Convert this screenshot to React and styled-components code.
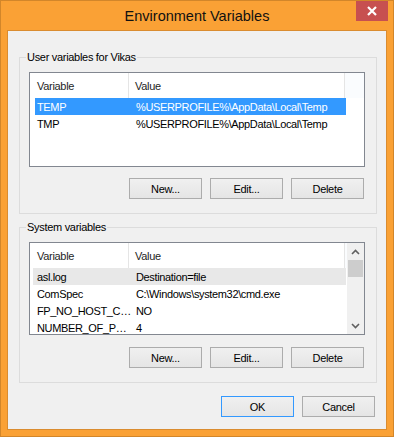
import React from 'react';
import styled, { createGlobalStyle } from 'styled-components';

const userVars = [
  { name: 'TEMP', value: '%USERPROFILE%\\AppData\\Local\\Temp', selected: true },
  { name: 'TMP', value: '%USERPROFILE%\\AppData\\Local\\Temp' },
];

const systemVars = [
  { name: 'asl.log', value: 'Destination=file', hover: true },
  { name: 'ComSpec', value: 'C:\\Windows\\system32\\cmd.exe' },
  { name: 'FP_NO_HOST_C…', value: 'NO' },
  { name: 'NUMBER_OF_P…', value: '4' },
];

const Chevron = ({ up }) => (
  <svg width="9" height="6" viewBox="0 0 9 6">
    <path
      d={up ? 'M1 5 L4.5 1.5 L8 5' : 'M1 1 L4.5 4.5 L8 1'}
      fill="none"
      stroke="#606060"
      strokeWidth="1.6"
    />
  </svg>
);

const VarList = ({ rows, height, scroll }) => (
  <ListBox $height={height}>
    <ListBody>
      <HeaderRow>
        <HeaderCell $width={99}>Variable</HeaderCell>
        <HeaderCell $width={216} $pad={6}>Value</HeaderCell>
        <HeaderFill />
      </HeaderRow>
      {rows.map(row => (
        <Row
          key={row.name}
          $bg={row.selected ? '#3399FF' : row.hover ? '#E8E8E8' : null}
          $inset={row.selected ? 5 : 3}
          $selected={row.selected}
        >
          <Cell $width={100}>{row.name}</Cell>
          <Cell $width={216} $pad={6}>{row.value}</Cell>
        </Row>
      ))}
    </ListBody>
    {scroll && (
      <ScrollBar>
        <ScrollArrow><Chevron up /></ScrollArrow>
        <Thumb />
        <Track />
        <ScrollArrow><Chevron /></ScrollArrow>
      </ScrollBar>
    )}
  </ListBox>
);

const Actions = ({ top }) => (
  <ButtonRow $top={top}>
    <Button>New...</Button>
    <Button>Edit...</Button>
    <Button>Delete</Button>
  </ButtonRow>
);

const App = () => {
  return (
    <>
      <GlobalStyle />
      <Window>
        <TitleBar>
          <span />
          <Title>Environment Variables</Title>
          <CloseButton>
            <svg width="10" height="10" viewBox="0 0 10 10">
              <path d="M1 1 L9 9 M9 1 L1 9" stroke="#fff" strokeWidth="2.2" />
            </svg>
          </CloseButton>
        </TitleBar>
        <Client>
          <Group $top={19}>
            <Legend>User variables for Vikas</Legend>
            <VarList rows={userVars} height={95} />
            <Actions top={11} />
          </Group>
          <Group $top={6}>
            <Legend>System variables</Legend>
            <VarList rows={systemVars} height={93} scroll />
            <Actions top={12} />
          </Group>
          <Footer>
            <Button $default>OK</Button>
            <Button>Cancel</Button>
          </Footer>
        </Client>
      </Window>
    </>
  );
};

const GlobalStyle = createGlobalStyle`
  html, body {
    margin: 0;
    padding: 0;
  }
  body {
    font-family: "Liberation Sans", Arial, sans-serif;
    font-size: 11px;
    letter-spacing: -0.3px;
    color: #000;
  }
`;

const Window = styled.div`
  width: 394px;
  height: 437px;
  box-sizing: border-box;
  border: 1px solid #D2862A;
  background: #FAA135;
  padding: 0 6px 6px;
  display: flex;
  flex-direction: column;
`;

const TitleBar = styled.div`
  height: 29px;
  margin: 0 -6px;
  display: grid;
  grid-template-columns: 1fr auto 1fr;
  align-items: center;
`;

const Title = styled.div`
  font-size: 14.5px;
  letter-spacing: 0;
  color: #111;
  padding-top: 1px;
`;

const CloseButton = styled.div`
  justify-self: end;
  align-self: start;
  width: 32px;
  height: 20px;
  margin-right: 5px;
  background: #C75050;
  display: flex;
  align-items: center;
  justify-content: center;
`;

const Client = styled.div`
  flex: 1;
  border: 1px solid #DA8C30;
  background: #F0F0F0;
  padding: 0 9px 0 11px;
  display: flex;
  flex-direction: column;
`;

const Group = styled.fieldset`
  margin: ${p => p.$top}px 0 0;
  padding: 0 11px 14px 9px;
  border: 1px solid #DCDCDC;
  min-width: 0;
`;

const Legend = styled.legend`
  margin-left: -3px;
  padding: 0 1px;
  line-height: 14px;
  color: #000;
`;

const ListBox = styled.div`
  margin-top: 8px;
  height: ${p => p.$height}px;
  box-sizing: border-box;
  border: 1px solid #828790;
  background: #fff;
  display: flex;
  overflow: hidden;
`;

const ListBody = styled.div`
  flex: 1;
  display: flex;
  flex-direction: column;
`;

const HeaderRow = styled.div`
  height: 25px;
  display: flex;
  flex-shrink: 0;
`;

const HeaderCell = styled.div`
  width: ${p => p.$width}px;
  box-sizing: border-box;
  padding-left: ${p => p.$pad || 7}px;
  border-right: 1px solid #E5E5E5;
  display: flex;
  align-items: center;
  color: #1E1E1E;
`;

const HeaderFill = styled.div`
  flex: 1;
  background: #FAFCFE;
`;

const Row = styled.div`
  width: 316px;
  height: 17px;
  flex-shrink: 0;
  display: flex;
  align-items: center;
  color: ${p => (p.$selected ? '#fff' : '#000')};
  background: ${p =>
    p.$bg ? `linear-gradient(90deg, transparent ${p.$inset}px, ${p.$bg} ${p.$inset}px)` : 'transparent'};
`;

const Cell = styled.div`
  width: ${p => p.$width}px;
  box-sizing: border-box;
  padding-left: ${p => p.$pad || 7}px;
  white-space: nowrap;
  letter-spacing: -0.35px;
`;

const ScrollBar = styled.div`
  width: 17px;
  background: #F0F0F0;
  display: flex;
  flex-direction: column;
`;

const ScrollArrow = styled.div`
  height: 17px;
  display: flex;
  align-items: center;
  justify-content: center;
`;

const Thumb = styled.div`
  height: 17px;
  margin: 0 1px;
  background: #CDCDCD;
`;

const Track = styled.div`
  flex: 1;
`;

const ButtonRow = styled.div`
  margin-top: ${p => p.$top}px;
  padding-right: 1px;
  display: flex;
  justify-content: flex-end;
  gap: 8px;
`;

const Button = styled.div`
  width: 73px;
  height: 21px;
  box-sizing: border-box;
  border: 1px solid ${p => (p.$default ? '#3399FF' : '#ACACAC')};
  background: linear-gradient(#F0F0F0, #E5E5E5);
  display: flex;
  align-items: center;
  justify-content: center;
  color: #000;
`;

const Footer = styled.div`
  margin-top: 13px;
  padding-right: 2px;
  display: flex;
  justify-content: flex-end;
  gap: 8px;
`;

export default App;
